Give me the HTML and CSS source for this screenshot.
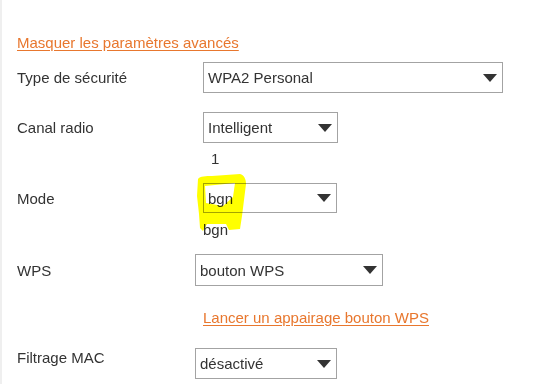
FILE: index.html
```html
<!DOCTYPE html>
<html lang="fr">
<head>
<meta charset="utf-8">
<link rel="stylesheet" href="styles.css">
</head>
<body>
<div class="page">
  <a class="link top-link" href="#">Masquer les paramètres avancés</a>

  <div class="row r1">
    <span class="label">Type de sécurité</span>
    <div class="select indent w300"><span>WPA2 Personal</span><svg class="arrow" viewBox="0 0 14 8"><path d="M0 0H14L7 8Z"/></svg></div>
  </div>

  <div class="row r2">
    <span class="label">Canal radio</span>
    <div class="select indent w135"><span>Intelligent</span><svg class="arrow" viewBox="0 0 14 8"><path d="M0 0H14L7 8Z"/></svg></div>
  </div>
  <div class="sub sub-1">1</div>

  <div class="row r3">
    <span class="label">Mode</span>
    <div class="select indent w134"><span>bgn</span><svg class="arrow" viewBox="0 0 14 8"><path d="M0 0H14L7 8Z"/></svg></div>
  </div>
  <div class="sub sub-bgn">bgn</div>

  <div class="row r4">
    <span class="label">WPS</span>
    <div class="select w188"><span>bouton WPS</span><svg class="arrow" viewBox="0 0 14 8"><path d="M0 0H14L7 8Z"/></svg></div>
  </div>
  <div class="sub sub-link"><a class="link" href="#">Lancer un appairage bouton WPS</a></div>

  <div class="row r5">
    <span class="label label-top">Filtrage MAC</span>
    <div class="select w142"><span>désactivé</span><svg class="arrow" viewBox="0 0 14 8"><path d="M0 0H14L7 8Z"/></svg></div>
  </div>

  <svg class="marker" viewBox="0 0 543 384" width="543" height="384">
    <path fill-rule="evenodd" d="M198 179 C200 176 206 176 212 176 L240 174 C244 175 246 179 246 184 L244 200 L242 216 L240 229 L229 230 L226 224 L207 224 L203 231 L200 228 L199 214 L197 196 Z M205 186 L235 183 L233 197 L223 206 L206 203 Z"/>
  </svg>
</div>
</body>
</html>
```
FILE: styles.css
```css
html, body {
  margin: 0;
  padding: 0;
  background: #fff;
}
body {
  font-family: "Liberation Sans", Arial, sans-serif;
  font-size: 15px;
  line-height: 17px;
  color: #333;
}
.page {
  position: relative;
  width: 541px;
  height: 384px;
  border-left: 2px solid #efefef;
  box-sizing: border-box;
  padding: 34px 0 0 15px;
  overflow: hidden;
}
.link {
  color: #e8772e;
  text-decoration: underline;
  text-underline-offset: 2px;
}
.top-link {
  display: block;
  width: max-content;
}
.row {
  display: grid;
  grid-template-columns: 178px auto;
  align-items: center;
  justify-items: start;
}
.label {
  color: #333;
}
.label-top {
  align-self: start;
  margin-top: 1px;
}
.select {
  position: relative;
  box-sizing: border-box;
  height: 31px;
  border: 1px solid #a3a3a3;
  background: #fff;
  display: flex;
  align-items: center;
  padding-left: 4px;
  color: #333;
}
.indent { margin-left: 8px; }
.w300 { width: 300px; }
.w135 { width: 135px; }
.w134 { width: 134px; height: 30px; }
.w188 { width: 188px; height: 32px; }
.w142 { width: 142px; }
.arrow {
  position: absolute;
  right: 5px;
  top: 50%;
  width: 14px;
  height: 8px;
  margin-top: -4px;
  fill: #333;
}
.r1 { margin-top: 11px; }
.r2 { margin-top: 19px; }
.r3 { margin-top: 16px; }
.r4 { margin-top: 16px; }
.r5 { margin-top: 22px; }
.sub { padding-left: 186px; }
.sub-1 { margin-top: 7px; padding-left: 194px; }
.sub-bgn { margin-top: 8px; }
.sub-link { margin-top: 23px; }
.marker {
  position: absolute;
  left: -2px;
  top: 0;
  fill: #ffff00;
  mix-blend-mode: multiply;
  pointer-events: none;
}
```
